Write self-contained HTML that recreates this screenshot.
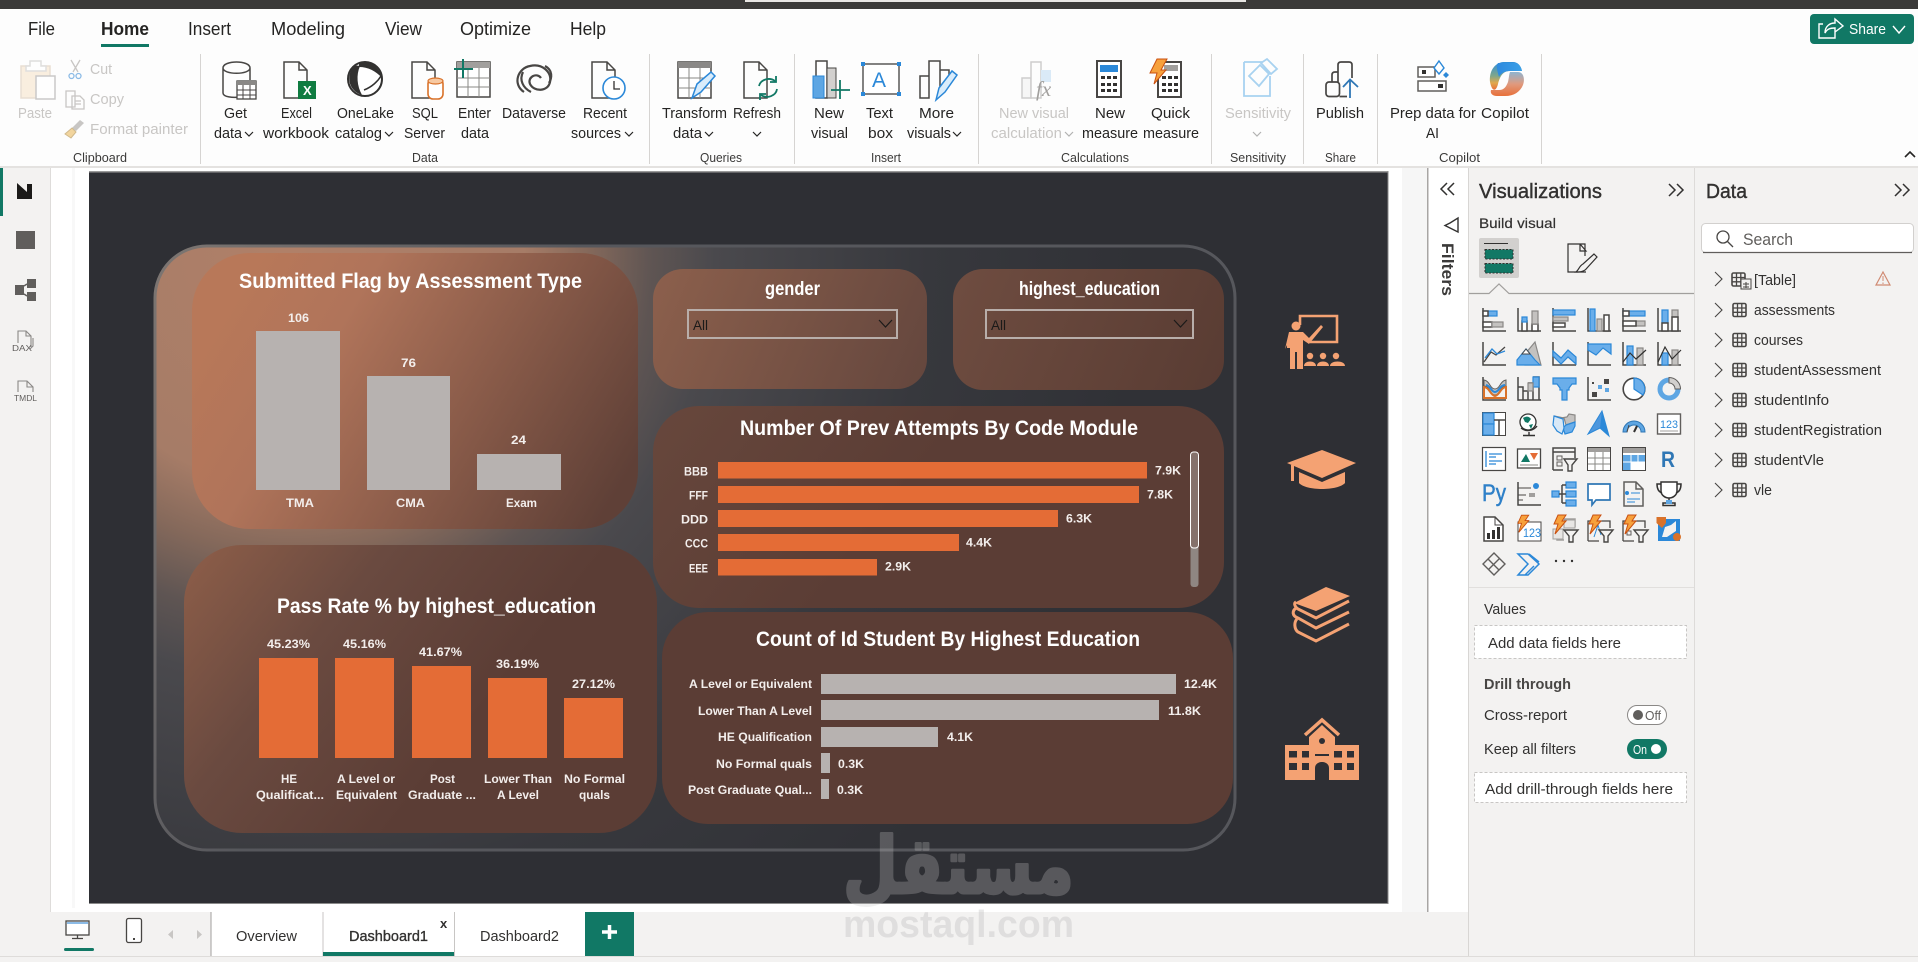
<!DOCTYPE html>
<html lang="en"><head><meta charset="utf-8"><title>Power BI Desktop</title>
<style>
html,body{margin:0;padding:0;background:#fff;width:1918px;height:962px;overflow:hidden}
svg{display:block;font-family:"Liberation Sans",sans-serif}
.t{font-size:18px;fill:#252423}
.r{font-size:15px;fill:#252423}
.q{font-size:15px;fill:#c8c6c4}
.g{font-size:13px;fill:#3b3a39}
.w{font-weight:700;fill:#fff;font-size:21px}
.l{font-weight:700;fill:#f3eeec;font-size:12px}
.v{font-size:14.5px;fill:#323130}
.d{fill:none;stroke:#484644;stroke-width:1.5}
.e{fill:none;stroke:#5f5d5b;stroke-width:1.6}
.b{fill:#6aaeea;stroke:#2b88d8;stroke-width:1.2}
.h{fill:#c4c2c0;stroke:#8a8886;stroke-width:1.2}
.n{fill:#fff;stroke:#484644;stroke-width:1.5}
.o{fill:#f4a273}
</style></head><body>
<svg width="1918" height="962" viewBox="0 0 1918 962" xmlns="http://www.w3.org/2000/svg">
<defs>
<radialGradient id="gOuter" gradientUnits="userSpaceOnUse" cx="0" cy="0" r="1" gradientTransform="translate(290,250) scale(850,860)"><stop offset="0" stop-color="#b08068"/><stop offset=".275" stop-color="#a67c67"/><stop offset=".35" stop-color="#85695b"/><stop offset=".425" stop-color="#5f5553"/><stop offset=".5" stop-color="#4a494d"/><stop offset=".75" stop-color="#37383d"/><stop offset="1" stop-color="#303136"/></radialGradient>
<linearGradient id="gStroke" gradientUnits="userSpaceOnUse" x1="155" y1="246" x2="1235" y2="850"><stop offset="0" stop-color="#7d7672"/><stop offset=".3" stop-color="#56575c"/><stop offset="1" stop-color="#56575c"/></linearGradient>
<linearGradient id="gC1" gradientUnits="userSpaceOnUse" x1="230" y1="300" x2="600" y2="520"><stop offset="0" stop-color="#b87859"/><stop offset=".25" stop-color="#b0745a"/><stop offset="1" stop-color="#5f4037"/></linearGradient>
<linearGradient id="gC2" gradientUnits="userSpaceOnUse" x1="660" y1="275" x2="920" y2="385"><stop offset="0" stop-color="#8b5f4c"/><stop offset="1" stop-color="#65473e"/></linearGradient>
<linearGradient id="gC3" gradientUnits="userSpaceOnUse" x1="960" y1="275" x2="1220" y2="385"><stop offset="0" stop-color="#6e4c40"/><stop offset="1" stop-color="#593c33"/></linearGradient>
<linearGradient id="gC4" gradientUnits="userSpaceOnUse" x1="660" y1="410" x2="850" y2="560"><stop offset="0" stop-color="#67473c"/><stop offset="1" stop-color="#5b3d35"/></linearGradient>
<linearGradient id="gC5" gradientUnits="userSpaceOnUse" x1="200" y1="555" x2="450" y2="750"><stop offset="0" stop-color="#8a5c48"/><stop offset=".45" stop-color="#6a4a40"/><stop offset="1" stop-color="#5b3d35"/></linearGradient>
<linearGradient id="gCopB" x1="0" y1="0" x2="1" y2="0"><stop offset="0" stop-color="#2f8ade"/><stop offset="1" stop-color="#3aa0e8"/></linearGradient>
<linearGradient id="gCopL" x1="0" y1="0" x2="0" y2="1"><stop offset="0" stop-color="#2f8fdc"/><stop offset=".5" stop-color="#7fa68a"/><stop offset=".75" stop-color="#e0a94e"/><stop offset="1" stop-color="#e8703a"/></linearGradient>
<linearGradient id="gCopR" x1="0" y1="0" x2="0" y2="1"><stop offset="0" stop-color="#8fb4d0"/><stop offset=".5" stop-color="#e09a7e"/><stop offset="1" stop-color="#e8703a"/></linearGradient>
<g id="ax"><path class="d" d="M1 0V23H24"/></g>
<g id="tb"><rect x="1" y="1" width="13" height="13" rx="1.5" fill="none" stroke="#484644" stroke-width="1.6"/><path d="M5.5 1V14M9.8 1V14M1 5.5H14M1 9.8H14" stroke="#484644" stroke-width="1.3" fill="none"/></g>
<path id="ch" d="M0 0L4 4L8 0" fill="none" stroke="#252423" stroke-width="1.2"/>
<g id="doc"><path class="d" d="M1 1H16L24 9V37H1Z M16 1V9H24"/></g>
<g id="bolt"><path d="M6 0H14L10 6H14L3 19L6 9H2Z" fill="#f7a13c" stroke="#ca5010" stroke-width="1"/></g>
</defs>

<!-- base -->
<rect width="1918" height="962" fill="#fff"/>
<rect width="1918" height="9" fill="#3b3a39"/>
<rect x="745" width="501" height="2" fill="#e8e6e4"/>
<rect y="9" width="1918" height="157" fill="#fdfdfd"/>
<rect y="166" width="1918" height="2" fill="#e4e2e0"/>

<!-- tabs -->
<text class="t" x="28" y="35" textLength="27" lengthAdjust="spacingAndGlyphs">File</text>
<text class="t" x="101" y="35" textLength="48" lengthAdjust="spacingAndGlyphs" style="font-weight:700">Home</text>
<rect x="101" y="44" width="48" height="3" fill="#117865"/>
<text class="t" x="188" y="35" textLength="43" lengthAdjust="spacingAndGlyphs">Insert</text>
<text class="t" x="271" y="35" textLength="74" lengthAdjust="spacingAndGlyphs">Modeling</text>
<text class="t" x="385" y="35" textLength="37" lengthAdjust="spacingAndGlyphs">View</text>
<text class="t" x="460" y="35" textLength="71" lengthAdjust="spacingAndGlyphs">Optimize</text>
<text class="t" x="570" y="35" textLength="36" lengthAdjust="spacingAndGlyphs">Help</text>
<rect x="1810" y="14" width="104" height="30" rx="4" fill="#117865"/>
<path d="M1823 24H1819V38H1835V32M1825 33C1825 26 1830 23 1835 23V19L1843 26L1835 32V28C1830 28 1827 29 1825 33Z" fill="none" stroke="#fff" stroke-width="1.4"/>
<text x="1849" y="34" font-size="15" fill="#fff" textLength="37" lengthAdjust="spacingAndGlyphs">Share</text>
<path d="M1893 26L1899 33L1905 26" fill="none" stroke="#fff" stroke-width="1.4"/>

<!-- ribbon dividers -->
<g stroke="#d6d4d2" stroke-width="1"><path d="M200.500 54V164M649.500 54V164M794.500 54V164M978.500 54V164M1211.500 54V164M1303.500 54V164M1377.500 54V164M1541.500 54V164"/></g>

<!-- ribbon labels -->
<text class="q" x="18" y="118" textLength="34" lengthAdjust="spacingAndGlyphs">Paste</text>
<text class="q" x="90" y="74" textLength="22" lengthAdjust="spacingAndGlyphs">Cut</text>
<text class="q" x="90" y="104" textLength="34" lengthAdjust="spacingAndGlyphs">Copy</text>
<text class="q" x="90" y="134" textLength="98" lengthAdjust="spacingAndGlyphs">Format painter</text>
<text class="g" x="73" y="162" textLength="54" lengthAdjust="spacingAndGlyphs">Clipboard</text>
<text class="r" x="224" y="118" textLength="23" lengthAdjust="spacingAndGlyphs">Get</text>
<text class="r" x="214" y="138" textLength="28" lengthAdjust="spacingAndGlyphs">data</text><use href="#ch" x="245" y="132"/>
<text class="r" x="281" y="118" textLength="31" lengthAdjust="spacingAndGlyphs">Excel</text>
<text class="r" x="263" y="138" textLength="66" lengthAdjust="spacingAndGlyphs">workbook</text>
<text class="r" x="337" y="118" textLength="57" lengthAdjust="spacingAndGlyphs">OneLake</text>
<text class="r" x="335" y="138" textLength="47" lengthAdjust="spacingAndGlyphs">catalog</text><use href="#ch" x="385" y="132"/>
<text class="r" x="412" y="118" textLength="26" lengthAdjust="spacingAndGlyphs">SQL</text>
<text class="r" x="404" y="138" textLength="41" lengthAdjust="spacingAndGlyphs">Server</text>
<text class="r" x="458" y="118" textLength="33" lengthAdjust="spacingAndGlyphs">Enter</text>
<text class="r" x="461" y="138" textLength="28" lengthAdjust="spacingAndGlyphs">data</text>
<text class="r" x="502" y="118" textLength="64" lengthAdjust="spacingAndGlyphs">Dataverse</text>
<text class="r" x="583" y="118" textLength="44" lengthAdjust="spacingAndGlyphs">Recent</text>
<text class="r" x="571" y="138" textLength="50" lengthAdjust="spacingAndGlyphs">sources</text><use href="#ch" x="625" y="132"/>
<text class="g" x="412" y="162" textLength="26" lengthAdjust="spacingAndGlyphs">Data</text>
<text class="r" x="662" y="118" textLength="65" lengthAdjust="spacingAndGlyphs">Transform</text>
<text class="r" x="673" y="138" textLength="29" lengthAdjust="spacingAndGlyphs">data</text><use href="#ch" x="705" y="132"/>
<text class="r" x="733" y="118" textLength="48" lengthAdjust="spacingAndGlyphs">Refresh</text><use href="#ch" x="753" y="132"/>
<text class="g" x="700" y="162" textLength="42" lengthAdjust="spacingAndGlyphs">Queries</text>
<text class="r" x="814" y="118" textLength="30" lengthAdjust="spacingAndGlyphs">New</text>
<text class="r" x="811" y="138" textLength="37" lengthAdjust="spacingAndGlyphs">visual</text>
<text class="r" x="866" y="118" textLength="27" lengthAdjust="spacingAndGlyphs">Text</text>
<text class="r" x="868" y="138" textLength="25" lengthAdjust="spacingAndGlyphs">box</text>
<text class="r" x="919" y="118" textLength="35" lengthAdjust="spacingAndGlyphs">More</text>
<text class="r" x="907" y="138" textLength="44" lengthAdjust="spacingAndGlyphs">visuals</text><use href="#ch" x="953" y="132"/>
<text class="g" x="871" y="162" textLength="30" lengthAdjust="spacingAndGlyphs">Insert</text>
<text class="q" x="999" y="118" textLength="70" lengthAdjust="spacingAndGlyphs">New visual</text>
<text class="q" x="991" y="138" textLength="71" lengthAdjust="spacingAndGlyphs">calculation</text><use href="#ch" x="1065" y="132" style="opacity:.35"/>
<text class="r" x="1095" y="118" textLength="30" lengthAdjust="spacingAndGlyphs">New</text>
<text class="r" x="1082" y="138" textLength="56" lengthAdjust="spacingAndGlyphs">measure</text>
<text class="r" x="1151" y="118" textLength="39" lengthAdjust="spacingAndGlyphs">Quick</text>
<text class="r" x="1143" y="138" textLength="56" lengthAdjust="spacingAndGlyphs">measure</text>
<text class="g" x="1061" y="162" textLength="68" lengthAdjust="spacingAndGlyphs">Calculations</text>
<text class="q" x="1225" y="118" textLength="66" lengthAdjust="spacingAndGlyphs">Sensitivity</text><use href="#ch" x="1253" y="132" style="opacity:.35"/>
<text class="g" x="1230" y="162" textLength="56" lengthAdjust="spacingAndGlyphs">Sensitivity</text>
<text class="r" x="1316" y="118" textLength="48" lengthAdjust="spacingAndGlyphs">Publish</text>
<text class="g" x="1325" y="162" textLength="31" lengthAdjust="spacingAndGlyphs">Share</text>
<text class="r" x="1390" y="118" textLength="86" lengthAdjust="spacingAndGlyphs">Prep data for</text>
<text class="r" x="1426" y="138" textLength="13" lengthAdjust="spacingAndGlyphs">AI</text>
<text class="r" x="1481" y="118" textLength="48" lengthAdjust="spacingAndGlyphs">Copilot</text>
<text class="g" x="1439" y="162" textLength="41" lengthAdjust="spacingAndGlyphs">Copilot</text>
<path d="M1905 157L1910 152L1915 157" fill="none" stroke="#252423" stroke-width="1.6"/>

<!-- ribbon icons -->
<g opacity=".55">
<path d="M21 66H50V98H21Z" fill="#f6e2c8" stroke="#d8c6b0" stroke-width="1.5"/><path d="M30 66V61H41V66H46V71H26V66Z" fill="#fff" stroke="#c8c6c4" stroke-width="1.5"/><rect x="36" y="76" width="19" height="23" fill="#fff" stroke="#a19f9d" stroke-width="1.5"/>
</g>
<g fill="none" stroke="#c8c6c4" stroke-width="1.3"><path d="M71 60L78 72M80 60L73 72"/><circle cx="71.500" cy="76" r="2.500" stroke="#8cbbe6"/><circle cx="78.500" cy="76" r="2.500" stroke="#8cbbe6"/>
<path d="M66 91H75V107H66ZM72 96H80L84 100V109H72Z M75 101H81M75 104H81"/></g>
<path d="M80 120L84 123L76 131L72 128Z" fill="#c8c6c4"/><path d="M72 128L76 132L71 138L65 134Z" fill="#f2d59e" stroke="#d0b98c"/>
<!-- get data -->
<path class="d" d="M223 68V93C223 97 233 98 240 97M250 80V68M223 68C223 60 250 60 250 68C250 75 223 75 223 68Z"/><rect x="237" y="81" width="19" height="18" fill="#fff" stroke="#484644" stroke-width="1.3"/><rect x="237" y="81" width="19" height="4" fill="#8a8886"/><path d="M243 85V99M250 85V99M237 90H256M237 95H256" stroke="#484644"/>
<!-- excel -->
<use href="#doc" x="283" y="61"/><rect x="298" y="81" width="18" height="18" fill="#107c41"/><text x="303" y="95" font-size="13" font-weight="700" fill="#fff">X</text>
<!-- onelake -->
<circle cx="365" cy="79" r="17" fill="#fff" stroke="#323130" stroke-width="2"/><path d="M351 70C346 82 352 92 362 95C357 86 356 75 360 66C356 65 353 66 351 70Z" fill="#323130"/><path d="M359 62C369 60 379 66 382 78C376 71 368 67 359 67Z" fill="#323130"/><path d="M364 90C372 87 378 81 381 76" fill="none" stroke="#323130" stroke-width="1.500"/>
<!-- sql -->
<use href="#doc" x="411" y="61"/><rect x="428" y="79" width="15" height="20" rx="5" fill="#fff" stroke="#d9722a" stroke-width="1.6"/><ellipse cx="435.500" cy="81" rx="7.500" ry="3" fill="#f7c9a2" stroke="#d9722a" stroke-width="1.2"/>
<!-- enter data -->
<rect x="457" y="62" width="33" height="35" fill="#fff" stroke="#484644" stroke-width="1.5"/><rect x="457" y="62" width="33" height="6" fill="#a19f9d"/><path d="M468 68V97M479 68V97M457 78H490M457 87H490" stroke="#8a8886"/><path d="M455 59V78M446 69H465" stroke="#117865" stroke-width="2" transform="translate(8,0)"/>
<!-- dataverse -->
<g fill="none" stroke="#484644" stroke-width="2.2"><path d="M524 92C512 84 518 68 530 66C542 63 552 72 550 82C548 92 534 92 530 84C527 77 537 72 541 78"/><path d="M545 66C553 70 552 78 549 83M523 72C519 80 523 88 531 92"/></g>
<!-- recent -->
<use href="#doc" x="591" y="61"/><circle cx="614" cy="88" r="11" fill="#fff" stroke="#2b88d8" stroke-width="1.6"/><path d="M614 81V89H620" fill="none" stroke="#323130" stroke-width="1.3"/>
<!-- transform -->
<rect x="678" y="62" width="33" height="36" fill="#fff" stroke="#484644" stroke-width="1.5"/><rect x="678" y="62" width="33" height="6" fill="#8a8886"/><path d="M689 68V98M700 68V98M678 78H711M678 88H711" stroke="#8a8886"/><path d="M692 98L697 84L711 72L715 76L701 92Z" fill="#d9ecfb" stroke="#2b88d8" stroke-width="1.5"/>
<!-- refresh -->
<use href="#doc" x="743" y="61"/><g fill="none" stroke="#117865" stroke-width="1.8"><path d="M759 86A10 9 0 0 1 775 81M777 89A10 9 0 0 1 761 95"/><path d="M776 76V82H770M760 100V94H766"/></g>
<!-- new visual -->
<rect x="816" y="61" width="11" height="37" fill="#fff" stroke="#484644" stroke-width="1.5"/><rect x="827" y="68" width="9" height="30" fill="#d2d0ce" stroke="#484644"/><rect x="813" y="76" width="11" height="22" fill="#5ea6e3" stroke="#2b88d8"/><path d="M840 80V99M831 90H850" stroke="#117865" stroke-width="1.8"/>
<!-- text box -->
<rect x="863" y="64" width="36" height="30" fill="#fff" stroke="#323130" stroke-width="1.2"/><g fill="#2b88d8"><rect x="861" y="62" width="4" height="4"/><rect x="897" y="62" width="4" height="4"/><rect x="861" y="92" width="4" height="4"/><rect x="897" y="92" width="4" height="4"/></g><text x="872" y="87" font-size="21" fill="#2b88d8">A</text>
<!-- more visuals -->
<path class="d" d="M920 98V76H929V98ZM929 76V61H940V90M940 70H949V78"/><path d="M936 100L939 88L952 71L957 75L945 92Z" fill="#d9ecfb" stroke="#2b88d8" stroke-width="1.5"/>
<!-- new visual calc -->
<g opacity=".4"><rect x="1022" y="78" width="9" height="20" fill="#eee" stroke="#8a8886" stroke-width="1.5"/><rect x="1031" y="62" width="10" height="36" fill="#fff" stroke="#8a8886" stroke-width="1.5"/><rect x="1041" y="70" width="10" height="12" fill="#a8cff0"/></g><text x="1036" y="96" font-size="21" font-style="italic" font-family="Liberation Serif" fill="#a19f9d">fx</text>
<!-- measure -->
<rect x="1097" y="61" width="24" height="36" fill="#fff" stroke="#484644" stroke-width="2"/><rect x="1100" y="65" width="18" height="7" fill="#2b88d8"/>
<g fill="#323130"><rect x="1101" y="76" width="4" height="3"/><rect x="1107" y="76" width="4" height="3"/><rect x="1113" y="76" width="4" height="3"/><rect x="1101" y="83" width="4" height="3"/><rect x="1107" y="83" width="4" height="3"/><rect x="1113" y="83" width="4" height="3"/><rect x="1101" y="89" width="4" height="3"/><rect x="1107" y="89" width="4" height="3"/><rect x="1113" y="89" width="4" height="3"/></g>
<!-- quick measure -->
<rect x="1158" y="62" width="23" height="35" fill="#fff" stroke="#484644" stroke-width="2"/><rect x="1164" y="65" width="14" height="6" fill="#a19f9d"/>
<g fill="#323130"><rect x="1162" y="76" width="4" height="3"/><rect x="1168" y="76" width="4" height="3"/><rect x="1174" y="76" width="4" height="3"/><rect x="1162" y="83" width="4" height="3"/><rect x="1168" y="83" width="4" height="3"/><rect x="1174" y="83" width="4" height="3"/><rect x="1162" y="89" width="4" height="3"/><rect x="1168" y="89" width="4" height="3"/><rect x="1174" y="89" width="4" height="3"/></g>
<path d="M1157 59H1167L1161 70H1166L1154 84L1157 73H1150Z" fill="#f7a13c" stroke="#ca5010"/>
<!-- sensitivity -->
<g fill="none" stroke="#a8d2f0" stroke-width="1.8"><path d="M1244 62H1262M1270 76V96H1244V62"/><path d="M1249 76L1259 86L1269 74L1260 65ZM1261 63L1267 59L1277 69L1271 74Z"/></g>
<!-- publish -->
<g fill="none" stroke="#484644" stroke-width="1.700"><rect x="1326" y="82" width="13.500" height="14.500" rx="3"/><path d="M1332 82V75Q1332 72 1335 72H1338M1338 82V65Q1338 62 1341 62H1349Q1352 62 1352 65V78M1339.500 96.500H1347"/></g><path d="M1350 98V80M1343 87L1350 79.500L1358 87" fill="none" stroke="#2f77b5" stroke-width="1.800"/>
<!-- prep -->
<rect x="1418" y="67" width="17" height="10" fill="#fff" stroke="#605e5c" stroke-width="1.500"/><rect x="1422" y="70" width="4" height="4" fill="#323130"/><rect x="1418" y="81" width="28" height="10" fill="#fff" stroke="#605e5c" stroke-width="1.500"/><rect x="1438" y="84" width="5" height="4" fill="#323130"/>
<path d="M1439 61L1444 68L1439 74L1434 68Z" fill="#fff" stroke="#2b88d8" stroke-width="1.400"/><path d="M1446 72L1449 75L1446 78L1443 75Z" fill="#2b88d8"/>
<!-- copilot -->
<path d="M1490 82C1489 72 1494 63 1503 62H1513C1518 62 1521 66 1522 71H1510C1503 71 1500 76 1498 84C1496 92 1492 92 1490 82Z" fill="url(#gCopL)"/>
<path d="M1498 63H1513C1518 62 1521 66 1522 71H1510C1505 71 1501 73 1499 77C1497 70 1496 66 1498 63Z" fill="url(#gCopB)"/>
<path d="M1510 72H1518C1524 72 1525 80 1523 85C1520 92 1514 96 1505 96H1497C1492 96 1490 93 1491 90H1499C1504 90 1506 87 1508 82C1509 78 1509 74 1510 72Z" fill="url(#gCopR)"/>

<!-- left nav -->
<rect y="168" width="50" height="744" fill="#f3f2f1"/><rect x="50" y="168" width="1" height="744" fill="#dedcda"/>
<rect y="168" width="3" height="48" fill="#117865"/>
<path d="M17 183L27 192V184H32V199H17Z" fill="#1b1a19"/>
<rect x="16" y="231" width="19" height="18" fill="#605e5c"/>
<rect x="15" y="285" width="9" height="10" fill="#605e5c"/><rect x="27" y="279" width="9" height="9" fill="#605e5c"/><rect x="27" y="292" width="9" height="9" fill="#605e5c"/><path d="M24 286L27 284M24 294L27 296" stroke="#605e5c" stroke-width="1.5"/>
<path d="M18 343V331H26L31 336V347M26 331V336H31M33 338V346L30 349" fill="none" stroke="#8a8886" stroke-width="1.1"/><text x="12" y="351" font-size="8" fill="#605e5c" textLength="20" lengthAdjust="spacingAndGlyphs">DAX</text>
<path d="M18 392V381H27L33 387V392M27 381V387H33" fill="none" stroke="#8a8886" stroke-width="1.1"/><text x="14" y="401" font-size="8" fill="#605e5c" textLength="23" lengthAdjust="spacingAndGlyphs">TMDL</text>

<!-- canvas -->
<rect x="72" y="168" width="3" height="740" fill="#f8f8f8"/>
<rect x="1402" y="168" width="26" height="744" fill="#f6f6f6"/>
<rect x="89" y="171" width="1299" height="733" fill="#2e2f34"/>
<rect x="89" y="171" width="1299" height="1.500" fill="#9a9a9a"/><rect x="89" y="903" width="1299" height="1" fill="#8a8a8a"/><rect x="1387.500" y="171" width="1" height="733" fill="#8a8a8a"/>
<rect x="155" y="246" width="1080" height="604" rx="52" fill="url(#gOuter)" stroke="url(#gStroke)" stroke-width="3"/>
<rect x="192" y="253" width="446" height="276" rx="58" fill="url(#gC1)"/>
<rect x="653" y="269" width="274" height="120" rx="30" fill="url(#gC2)"/>
<rect x="953" y="269" width="271" height="121" rx="30" fill="url(#gC3)"/>
<rect x="653" y="406" width="571" height="202" rx="46" fill="url(#gC4)"/>
<rect x="184" y="545" width="473" height="288" rx="58" fill="url(#gC5)"/>
<rect x="662" y="612" width="571" height="212" rx="46" fill="#5b3d35"/>

<!-- Submitted -->
<text class="w" x="239" y="288" textLength="343" lengthAdjust="spacingAndGlyphs">Submitted Flag by Assessment Type</text>
<g fill="#b7b2b0"><rect x="256" y="331" width="84" height="159"/><rect x="367" y="376" width="83" height="114"/><rect x="477" y="454" width="84" height="36"/></g>
<text class="l" x="288" y="322" textLength="21" lengthAdjust="spacingAndGlyphs">106</text>
<text class="l" x="401" y="367" textLength="15" lengthAdjust="spacingAndGlyphs">76</text>
<text class="l" x="511" y="444" textLength="15" lengthAdjust="spacingAndGlyphs">24</text>
<text class="l" x="286" y="507" textLength="28" lengthAdjust="spacingAndGlyphs">TMA</text>
<text class="l" x="396" y="507" textLength="29" lengthAdjust="spacingAndGlyphs">CMA</text>
<text class="l" x="506" y="507" textLength="31" lengthAdjust="spacingAndGlyphs">Exam</text>

<!-- slicers -->
<text x="765" y="295" font-size="19" font-weight="700" fill="#fff" textLength="55" lengthAdjust="spacingAndGlyphs">gender</text>
<text x="1019" y="295" font-size="19" font-weight="700" fill="#fff" textLength="141" lengthAdjust="spacingAndGlyphs">highest_education</text>
<rect x="688" y="310" width="209" height="28" fill="none" stroke="#b8aeaa" stroke-width="2"/>
<rect x="986" y="310" width="207" height="28" fill="none" stroke="#b8aeaa" stroke-width="2"/>
<text x="693" y="330" font-size="14" fill="#1b1a19" textLength="15" lengthAdjust="spacingAndGlyphs">All</text>
<text x="991" y="330" font-size="14" fill="#1b1a19" textLength="15" lengthAdjust="spacingAndGlyphs">All</text>
<path d="M879 320L885.500 327L892 320M1174 320L1180.500 327L1187 320" fill="none" stroke="#1b1a19" stroke-width="1.2"/>

<!-- Number -->
<text class="w" x="740" y="435" textLength="398" lengthAdjust="spacingAndGlyphs">Number Of Prev Attempts By Code Module</text>
<g fill="#e46c36"><rect x="718" y="462" width="429" height="16.500"/><rect x="718" y="486" width="421" height="17"/><rect x="718" y="510" width="340" height="17"/><rect x="718" y="534" width="241" height="17"/><rect x="718" y="559" width="159" height="16.500"/></g>
<text class="l" x="684" y="475.500" textLength="24" lengthAdjust="spacingAndGlyphs">BBB</text>
<text class="l" x="689" y="499.500" textLength="19" lengthAdjust="spacingAndGlyphs">FFF</text>
<text class="l" x="681" y="523.500" textLength="27" lengthAdjust="spacingAndGlyphs">DDD</text>
<text class="l" x="685" y="547.500" textLength="23" lengthAdjust="spacingAndGlyphs">CCC</text>
<text class="l" x="689" y="572.500" textLength="19" lengthAdjust="spacingAndGlyphs">EEE</text>
<text class="l" x="1155" y="474.500" textLength="26" lengthAdjust="spacingAndGlyphs">7.9K</text>
<text class="l" x="1147" y="498.500" textLength="26" lengthAdjust="spacingAndGlyphs">7.8K</text>
<text class="l" x="1066" y="522.500" textLength="26" lengthAdjust="spacingAndGlyphs">6.3K</text>
<text class="l" x="966" y="546.500" textLength="26" lengthAdjust="spacingAndGlyphs">4.4K</text>
<text class="l" x="885" y="570.500" textLength="26" lengthAdjust="spacingAndGlyphs">2.9K</text>
<rect x="1190.500" y="452" width="8" height="135" rx="3" fill="#8f8682"/><rect x="1190.500" y="452" width="8" height="96" rx="3" fill="#85716b" stroke="#fff" stroke-width="1"/>

<!-- Pass -->
<text class="w" x="277" y="613" textLength="319" lengthAdjust="spacingAndGlyphs">Pass Rate % by highest_education</text>
<g fill="#e46c36"><rect x="259" y="658" width="59" height="100"/><rect x="335" y="658" width="59" height="100"/><rect x="412" y="666" width="59" height="92"/><rect x="488" y="678" width="59" height="80"/><rect x="564" y="698" width="59" height="60"/></g>
<text class="l" x="267" y="648" textLength="43" lengthAdjust="spacingAndGlyphs">45.23%</text>
<text class="l" x="343" y="648" textLength="43" lengthAdjust="spacingAndGlyphs">45.16%</text>
<text class="l" x="419" y="656" textLength="43" lengthAdjust="spacingAndGlyphs">41.67%</text>
<text class="l" x="496" y="668" textLength="43" lengthAdjust="spacingAndGlyphs">36.19%</text>
<text class="l" x="572" y="688" textLength="43" lengthAdjust="spacingAndGlyphs">27.12%</text>
<text class="l" x="281" y="783" textLength="16" lengthAdjust="spacingAndGlyphs">HE</text>
<text class="l" x="256" y="799" textLength="68" lengthAdjust="spacingAndGlyphs">Qualificat...</text>
<text class="l" x="337" y="783" textLength="58" lengthAdjust="spacingAndGlyphs">A Level or</text>
<text class="l" x="336" y="799" textLength="61" lengthAdjust="spacingAndGlyphs">Equivalent</text>
<text class="l" x="430" y="783" textLength="25" lengthAdjust="spacingAndGlyphs">Post</text>
<text class="l" x="408" y="799" textLength="68" lengthAdjust="spacingAndGlyphs">Graduate ...</text>
<text class="l" x="484" y="783" textLength="68" lengthAdjust="spacingAndGlyphs">Lower Than</text>
<text class="l" x="497" y="799" textLength="42" lengthAdjust="spacingAndGlyphs">A Level</text>
<text class="l" x="564" y="783" textLength="61" lengthAdjust="spacingAndGlyphs">No Formal</text>
<text class="l" x="579" y="799" textLength="31" lengthAdjust="spacingAndGlyphs">quals</text>

<!-- Count -->
<text class="w" x="756" y="646" textLength="384" lengthAdjust="spacingAndGlyphs">Count of Id Student By Highest Education</text>
<g fill="#b7b2b0"><rect x="821" y="674" width="355" height="20"/><rect x="821" y="700" width="338" height="20"/><rect x="821" y="727" width="117" height="20"/><rect x="821" y="753" width="9" height="20"/><rect x="821" y="779" width="8" height="20"/></g>
<text class="l" x="689" y="688" textLength="123" lengthAdjust="spacingAndGlyphs">A Level or Equivalent</text>
<text class="l" x="698" y="715" textLength="114" lengthAdjust="spacingAndGlyphs">Lower Than A Level</text>
<text class="l" x="718" y="741" textLength="94" lengthAdjust="spacingAndGlyphs">HE Qualification</text>
<text class="l" x="716" y="768" textLength="96" lengthAdjust="spacingAndGlyphs">No Formal quals</text>
<text class="l" x="688" y="794" textLength="124" lengthAdjust="spacingAndGlyphs">Post Graduate Qual...</text>
<text class="l" x="1184" y="688" textLength="33" lengthAdjust="spacingAndGlyphs">12.4K</text>
<text class="l" x="1168" y="715" textLength="33" lengthAdjust="spacingAndGlyphs">11.8K</text>
<text class="l" x="947" y="741" textLength="26" lengthAdjust="spacingAndGlyphs">4.1K</text>
<text class="l" x="838" y="768" textLength="26" lengthAdjust="spacingAndGlyphs">0.3K</text>
<text class="l" x="837" y="794" textLength="26" lengthAdjust="spacingAndGlyphs">0.3K</text>

<!-- big side icons -->
<g>
<path d="M1300 325V316H1337V342H1310" fill="none" stroke="#f4a273" stroke-width="2.600"/>
<circle class="o" cx="1296" cy="326" r="4.500"/>
<path class="o" d="M1289 332H1303L1309 338L1321 325L1323 327L1309 344L1303 340V369H1297V352H1295V369H1290V348H1287V345L1285 349Z"/>
<g class="o"><circle cx="1310" cy="356" r="3.200"/><circle cx="1323" cy="356" r="3.200"/><circle cx="1336" cy="356" r="3.200"/><path d="M1304 366C1304 360 1316 360 1316 366ZM1317 366C1317 360 1329 360 1329 366ZM1330 366C1330 360 1345 360 1345 366Z"/></g>
<path class="o" d="M1287 463L1322 450L1356 463L1322 478Z"/>
<path class="o" d="M1299 472L1322 482L1345 472V483C1338 491 1306 491 1299 483Z"/>
<path class="o" d="M1291 465H1294V481H1291Z"/>
<path class="o" d="M1294 603L1326 587L1350 596L1316 611Z"/>
<g fill="none" stroke="#f4a273" stroke-width="3"><path d="M1349 601L1316 618L1298 609C1294 606 1294 603 1296 602M1349 612L1316 628L1298 618C1292 616 1292 611 1296 608M1349 624L1316 641L1298 632C1294 629 1294 622 1297 619"/></g>
<path d="M1305 735L1322 720L1339 735" fill="none" stroke="#f4a273" stroke-width="3.500"/>
<path class="o" d="M1309 745V737L1322 725L1335 737V745H1359V780H1285V745Z"/>
<g fill="#2e2f34"><circle cx="1322" cy="741" r="3"/><rect x="1315" y="754" width="14" height="2"/><rect x="1289" y="751" width="8" height="6.500"/><rect x="1302" y="751" width="7" height="6.500"/><rect x="1289" y="763" width="8" height="7"/><rect x="1302" y="763" width="7" height="7"/><rect x="1334" y="751" width="8" height="6.500"/><rect x="1347" y="751" width="7" height="6.500"/><rect x="1334" y="763" width="8" height="7"/><rect x="1347" y="763" width="7" height="7"/><path d="M1315 780V768C1315 760 1329 760 1329 768V780Z"/></g>
</g>

<!-- Filters pane -->
<rect x="1427" y="168" width="1.500" height="744" fill="#a8a6a4"/>
<rect x="1428.500" y="168" width="39.500" height="744" fill="#fff"/>
<path d="M1447 183L1441 189L1447 195M1454 183L1448 189L1454 195" fill="none" stroke="#323130" stroke-width="1.500"/>
<path d="M1458 218V232L1450 228L1445 225.500L1450 223Z" fill="none" stroke="#323130" stroke-width="1.400"/>
<text transform="translate(1442,243) rotate(90)" font-size="17" font-weight="700" fill="#3b3a39" textLength="53" lengthAdjust="spacingAndGlyphs">Filters</text>

<!-- Viz / data panes -->
<rect x="1468" y="168" width="450" height="789" fill="#f3f2f1"/>
<rect x="1468" y="168" width="1" height="788" fill="#d8d6d4"/><rect x="1694" y="168" width="1" height="788" fill="#dddbd9"/>
<rect x="0" y="912" width="1468" height="45" fill="#f3f2f1"/>
<rect x="0" y="956" width="1918" height="1" fill="#dedcda"/><rect y="957" width="1918" height="5" fill="#f3f2f1"/>
<text x="1479" y="198" font-size="20" fill="#323130" stroke="#323130" stroke-width=".4" textLength="123" lengthAdjust="spacingAndGlyphs">Visualizations</text>
<path d="M1669 184L1675 190L1669 196M1677 184L1683 190L1677 196M1895 184L1901 190L1895 196M1903 184L1909 190L1903 196" fill="none" stroke="#323130" stroke-width="1.500"/>
<text x="1706" y="198" font-size="20" fill="#323130" stroke="#323130" stroke-width=".4" textLength="41" lengthAdjust="spacingAndGlyphs">Data</text>
<text x="1479" y="228" font-size="14" fill="#323130" stroke="#323130" stroke-width=".2" textLength="77" lengthAdjust="spacingAndGlyphs">Build visual</text>
<rect x="1479" y="238" width="40" height="40" rx="2" fill="#d2d0ce"/>
<path d="M1484 243.500H1508" stroke="#323130"/>
<rect x="1485" y="249.500" width="28" height="9.500" fill="#117865" stroke="#323130" stroke-dasharray="2 1.500"/><rect x="1485" y="263.500" width="28" height="9.500" fill="#117865" stroke="#323130" stroke-dasharray="2 1.500"/>
<path d="M1585 256V244H1568V272H1586M1580 244V251H1586L1580 244" fill="none" stroke="#323130" stroke-width="1.200"/><path d="M1594 254L1597 257L1587 268C1584 272 1580 272 1576 272C1579 270 1579 266 1583 264Z" fill="#f3f2f1" stroke="#323130" stroke-width="1.200"/>
<path d="M1469 293.500H1489L1499 284L1509 293.500H1694" fill="none" stroke="#a19f9d" stroke-width="1.200"/>

<!-- viz grid -->
<g>
<g transform="translate(1482,308)"><use href="#ax"/><rect class="b" x="3" y="3" width="12" height="5"/><rect class="n" x="1" y="3" width="5" height="5"/><rect class="n" x="1" y="14" width="9" height="5"/><rect class="h" x="10" y="14" width="11" height="5"/></g>
<g transform="translate(1517,308)"><use href="#ax"/><rect class="n" x="5" y="13" width="5" height="10"/><rect class="b" x="5" y="9" width="5" height="5"/><rect class="n" x="15" y="16" width="6" height="7"/><rect class="h" x="15" y="3" width="6" height="13"/></g>
<g transform="translate(1552,308)"><use href="#ax"/><rect class="b" x="1" y="2" width="22" height="5"/><rect class="h" x="1" y="9" width="15" height="4"/><rect class="n" x="1" y="15" width="12" height="4"/></g>
<g transform="translate(1587,308)"><use href="#ax"/><rect class="b" x="3" y="1" width="5" height="22"/><rect class="h" x="10" y="11" width="5" height="12"/><rect class="n" x="17" y="7" width="5" height="16"/></g>
<g transform="translate(1622,308)"><use href="#ax"/><rect class="b" x="1" y="3" width="22" height="5"/><rect class="n" x="1" y="3" width="6" height="5"/><rect class="h" x="14" y="13" width="9" height="5"/><rect class="n" x="1" y="13" width="13" height="5"/></g>
<g transform="translate(1657,308)"><use href="#ax"/><rect class="b" x="5" y="2" width="6" height="13"/><rect class="n" x="5" y="15" width="6" height="8"/><rect class="h" x="15" y="2" width="6" height="7"/><rect class="n" x="15" y="9" width="6" height="14"/></g>

<g transform="translate(1482,342)"><use href="#ax"/><path d="M2 20L9 10L14 13L23 5" fill="none" stroke="#484644" stroke-width="1.300"/><path d="M3 16L10 7L15 12L23 9" fill="none" stroke="#2b88d8" stroke-width="1.300"/></g>
<g transform="translate(1517,342)"><path class="h" d="M8 12L18 0L24 23H8Z"/><path class="b" d="M0 23V18L9 7L18 18L23 23Z"/><path d="M9 7L5 12H13Z" fill="#fff" stroke="#484644"/></g>
<g transform="translate(1552,342)"><use href="#ax"/><path class="b" d="M1 9L9 16L16 8L24 15V22L16 15L9 22L1 14Z"/></g>
<g transform="translate(1587,342)"><use href="#ax"/><path class="b" d="M1 2H24V12L16 6L9 13L1 8Z"/></g>
<g transform="translate(1622,342)"><use href="#ax"/><rect class="b" x="5" y="4" width="6" height="19"/><rect class="h" x="15" y="6" width="6" height="17"/><path d="M1 20L8 11L14 17L24 8" fill="none" stroke="#323130" stroke-width="1.200"/></g>
<g transform="translate(1657,342)"><use href="#ax"/><rect class="b" x="5" y="11" width="6" height="12"/><rect class="h" x="15" y="8" width="6" height="15"/><path d="M1 20L8 5L15 17L24 8" fill="none" stroke="#323130" stroke-width="1.200"/></g>

<g transform="translate(1482,377)"><use href="#ax"/><path d="M2 3C8 4 8 12 13 12C18 12 18 4 24 3V9C18 9 18 18 13 18C8 18 8 9 2 9Z" fill="#c4c2c0" stroke="#605e5c"/><path d="M2 10C8 11 8 18 13 19C18 18 18 11 24 10V21H2Z" fill="none" stroke="#d9722a" stroke-width="2"/><path d="M4 8C9 9 9 15 13 15C17 15 18 8 23 8" fill="none" stroke="#2b88d8" stroke-width="2"/></g>
<g transform="translate(1517,377)"><path class="d" d="M1 0V23H24M1 10H6V23M6 14H11V23M11 6H16V23M16 0H22V23"/><rect class="b" x="16" y="0" width="6" height="10"/><rect class="h" x="11" y="6" width="5" height="8"/></g>
<g transform="translate(1552,377)"><path class="b" d="M1 1H24V7H20L17 11V13H15V23H10V13H8V11L5 7H1Z"/></g>
<g transform="translate(1587,377)"><use href="#ax"/><rect x="17" y="2" width="5" height="5" fill="#484644"/><rect x="11" y="8" width="4" height="4" fill="#5ea6e3"/><rect x="18" y="11" width="4" height="4" fill="#5ea6e3"/><rect x="5" y="15" width="5" height="5" fill="#484644"/><rect x="5" y="5" width="2" height="2" fill="#484644"/></g>
<g transform="translate(1622,377)"><circle cx="12" cy="12" r="10.800" fill="#fff" stroke="#484644" stroke-width="1.600"/><path class="b" d="M12 1A11 11 0 0 1 21 18L12 12Z"/></g>
<g transform="translate(1657,377)"><circle cx="12" cy="12" r="9" fill="none" stroke="#5ea6e3" stroke-width="5"/><path d="M12 0.500A11.500 11.500 0 0 1 23.500 12H18A6 6 0 0 0 12 6Z" fill="#d2d0ce" stroke="#605e5c"/></g>

<g transform="translate(1482,412)"><rect x="0.500" y="0.500" width="23" height="23" fill="#fff" stroke="#484644"/><rect class="b" x="1" y="1" width="11" height="11"/><rect class="b" x="1" y="12" width="11" height="11"/><path class="d" d="M12 8H23M17 8V23"/></g>
<g transform="translate(1517,412)"><circle cx="11" cy="10" r="8" fill="#fff" stroke="#323130" stroke-width="1.300"/><path d="M6 6C9 4 12 4 14 7L11 11L8 10ZM12 13L16 12L14 17Z" fill="#117865"/><path d="M20 14A11 11 0 0 1 4 16M12 20V23M6 23.500H18" fill="none" stroke="#323130" stroke-width="1.400"/></g>
<g transform="translate(1552,412)"><path class="h" d="M2 4L9 6L15 5L17 2L23 3V10L14 13L12 6Z"/><path class="b" d="M14 13L23 10V14L20 20L13 22L11 16Z"/><path class="b" d="M2 4L11 7L12 16L10 22L5 19L1 13Z" style="fill:#d8e8f6"/></g>
<g transform="translate(1587,412)"><path d="M15 -1L22 24L13 16L1 22Z" fill="#4e97dd" stroke="#2b88d8"/><path d="M15 -1L13 16L22 24Z" fill="#2b88d8"/></g>
<g transform="translate(1622,412)"><path d="M1 20A11 11 0 0 1 23 20H19A7 7 0 0 0 5 20Z" fill="#5ea6e3" stroke="#2f77b5"/><path d="M12 20L15 14" stroke="#323130" stroke-width="2"/><path d="M5 20L7 13" stroke="#484644"/></g>
<g transform="translate(1657,412)"><rect x="0.500" y="2" width="23" height="20" fill="#fff" stroke="#605e5c" stroke-width="1.400"/><text x="3" y="16" font-size="11" fill="#2b88d8" textLength="18" lengthAdjust="spacingAndGlyphs">123</text><path d="M3 19H21" stroke="#a19f9d"/></g>

<g transform="translate(1482,447)"><rect x="0.500" y="0.500" width="23" height="23" fill="#fff" stroke="#484644" stroke-width="1.200"/><path d="M4 4V20M7 7H20M7 10H14M7 14H20M7 17H14" stroke="#2b88d8" stroke-width="1.300"/></g>
<g transform="translate(1517,447)"><rect x="0.500" y="2" width="23" height="19" fill="#fff" stroke="#484644" stroke-width="1.300"/><path d="M4 15L9 7L13 15Z" fill="#117865"/><path d="M13 6H21L17 13Z" fill="#e46c36"/><path d="M3 18H21" stroke="#8a8886"/></g>
<g transform="translate(1552,447)"><path class="d" d="M1 23V1H23V11M1 5H23M1 23H11"/><rect x="5" y="9" width="5" height="4" fill="none" stroke="#605e5c"/><rect x="5" y="15" width="5" height="4" fill="none" stroke="#605e5c"/><path d="M12 12H25L20 18V24H16V18Z" fill="#f3f2f1" stroke="#484644" stroke-width="1.400"/></g>
<g transform="translate(1587,447)"><rect x="0.500" y="0.500" width="23" height="23" fill="#fff" stroke="#484644"/><rect x="1" y="1" width="22" height="4" fill="#a19f9d"/><path d="M8 5V23M16 5V23M1 11H23M1 17H23" stroke="#8a8886"/></g>
<g transform="translate(1622,447)"><rect x="0.500" y="0.500" width="23" height="23" fill="#fff" stroke="#484644"/><rect x="1" y="1" width="22" height="5" fill="#a19f9d"/><rect x="1" y="8" width="8" height="15" fill="#5ea6e3"/><rect x="9" y="8" width="14" height="7" fill="#5ea6e3"/><path d="M9 6V23M16 6V23M1 15H23" stroke="#fff"/></g>
<text x="1661" y="467" font-size="22" font-weight="700" fill="#2f77b5" textLength="14" lengthAdjust="spacingAndGlyphs">R</text>

<text x="1482" y="501" font-size="24" fill="#2f80c8" stroke="#2f80c8" stroke-width=".5" textLength="24" lengthAdjust="spacingAndGlyphs">Py</text>
<g transform="translate(1517,482)"><use href="#ax"/><path d="M1 6H14M1 13H9M1 18H6" stroke="#484644"/><circle cx="19" cy="4" r="3" fill="#2b88d8"/><rect x="12" y="11" width="6" height="4" fill="#a19f9d"/></g>
<g transform="translate(1552,482)"><rect class="b" x="0" y="9" width="7" height="6"/><rect class="b" x="14" y="0" width="10" height="6"/><rect class="b" x="14" y="9" width="10" height="6"/><rect class="b" x="14" y="18" width="10" height="6"/><path class="d" d="M7 12H14M10 3H14M10 21H14M10 3V21"/></g>
<g transform="translate(1587,482)"><path d="M1 2H23V18H9L5 23V18H1Z" fill="#fff" stroke="#2f77b5" stroke-width="1.700"/></g>
<g transform="translate(1622,482)"><path class="d" d="M2 24V0H14L21 7V24ZM14 0V7H21" style="stroke:#605e5c"/><circle cx="5" cy="11" r="2" fill="#2b88d8"/><path d="M9 11H18M5 17H18M5 20H13" stroke="#2b88d8"/></g>
<g transform="translate(1657,482)"><path d="M4 0H20V9C20 13 16 16 12 16C8 16 4 13 4 9Z" fill="#fff" stroke="#323130" stroke-width="1.500"/><path d="M4 2H0C0 7 2 10 5 11M20 2H24C24 7 22 10 19 11M12 16V20M6 23.500H18V21H6Z" fill="none" stroke="#323130" stroke-width="1.500"/><path d="M9 18H15V22H9Z" fill="#5ea6e3"/></g>

<g transform="translate(1482,517)"><path d="M2 24V0H13L21 8V24Z" fill="#fff" stroke="#484644" stroke-width="1.500"/><path d="M13 0V8H21" fill="none" stroke="#484644"/><rect x="5" y="16" width="3" height="6" fill="#323130"/><rect x="10" y="13" width="3" height="9" fill="#323130"/><rect x="15" y="10" width="3" height="12" fill="#323130"/></g>
<g transform="translate(1517,517)"><rect x="1" y="5" width="23" height="19" fill="#fff" stroke="#484644"/><text x="6" y="20" font-size="12" fill="#2b88d8" textLength="18" lengthAdjust="spacingAndGlyphs">123</text><use href="#bolt" x="-1" y="-2" transform="scale(.9)"/></g>
<g transform="translate(1552,517)"><path class="d" d="M12 2H23V10M5 22V23H12" style="stroke:#a19f9d"/><rect x="12" y="3" width="11" height="8" fill="#e8e6e4" stroke="#a19f9d"/><rect x="1" y="12" width="10" height="10" fill="#e8e6e4" stroke="#a19f9d"/><path d="M12 13H26L21 19V25H17V19Z" fill="#f3f2f1" stroke="#484644" stroke-width="1.400"/><use href="#bolt" x="0" y="-2"/></g>
<g transform="translate(1587,517)"><path d="M1 24V4H23V11M1 24H12" fill="none" stroke="#484644" stroke-width="1.300"/><path d="M7 20L11 8L14 18" fill="none" stroke="#2b88d8"/><path d="M12 13H26L21 19V25H17V19Z" fill="#f3f2f1" stroke="#484644" stroke-width="1.400"/><use href="#bolt" x="0" y="-2"/></g>
<g transform="translate(1622,517)"><path d="M1 24V4H23V11M1 24H12" fill="none" stroke="#484644" stroke-width="1.300"/><rect x="5" y="14" width="4" height="4" fill="none" stroke="#605e5c"/><path d="M12 13H26L21 19V25H17V19Z" fill="#f3f2f1" stroke="#484644" stroke-width="1.400"/><use href="#bolt" x="0" y="-2"/></g>
<g transform="translate(1657,517)"><rect x="1" y="2" width="22" height="22" fill="#2b88d8"/><path d="M5 20L8 10L14 8L19 4V14L10 20Z" fill="#f3f2f1"/><path d="M-0.500 0H9V6L5 11L-0.500 6Z" fill="#d9722a"/><circle cx="20" cy="20" r="4" fill="#d9722a"/></g>

<g transform="translate(1482,552)" fill="none" stroke="#605e5c" stroke-width="1.400"><path d="M12 1L23 12L12 23L1 12ZM6 7L17 18M18 6L7 17"/></g>
<g transform="translate(1517,552)" fill="none" stroke="#2b88d8" stroke-width="1.500"><path d="M1 2H11L22 12L11 23H1L11 12ZM8 23L17 14M12 2L22 10"/></g>
<g fill="#323130"><circle cx="1556" cy="561" r="1.200"/><circle cx="1564" cy="561" r="1.200"/><circle cx="1572" cy="561" r="1.200"/></g>
</g>

<rect x="1469" y="587" width="225" height="1" fill="#e1dfdd"/>
<text class="v" x="1484" y="614" font-size="14" textLength="42" lengthAdjust="spacingAndGlyphs">Values</text>
<rect x="1474.500" y="625.500" width="212" height="33" fill="#fff" stroke="#c8c6c4" stroke-dasharray="3 2"/>
<text class="v" x="1488" y="648" textLength="133" lengthAdjust="spacingAndGlyphs">Add data fields here</text>
<text class="v" x="1484" y="689" textLength="87" lengthAdjust="spacingAndGlyphs" style="font-weight:700;fill:#484644">Drill through</text>
<text class="v" x="1484" y="720" textLength="83" lengthAdjust="spacingAndGlyphs">Cross-report</text>
<rect x="1627.500" y="705.500" width="39" height="19" rx="9.500" fill="#fff" stroke="#8a8886"/><circle cx="1638" cy="715" r="5" fill="#605e5c"/><text x="1645" y="720" font-size="12.500" fill="#605e5c" textLength="16" lengthAdjust="spacingAndGlyphs">Off</text>
<text class="v" x="1484" y="754" textLength="92" lengthAdjust="spacingAndGlyphs">Keep all filters</text>
<rect x="1627" y="739" width="40" height="20" rx="10" fill="#117865"/><circle cx="1656" cy="749" r="5" fill="#fff"/><text x="1633" y="754" font-size="12.500" fill="#fff" textLength="14" lengthAdjust="spacingAndGlyphs">On</text>
<rect x="1474.500" y="772.500" width="212" height="30" fill="#fff" stroke="#c8c6c4" stroke-dasharray="3 2"/>
<text class="v" x="1485" y="794" textLength="188" lengthAdjust="spacingAndGlyphs">Add drill-through fields here</text>

<!-- data pane -->
<rect x="1701.500" y="223.500" width="212" height="29" rx="4" fill="#fff" stroke="#d2d0ce"/><path d="M1703 252.500H1912" stroke="#605e5c" stroke-width="1.200"/>
<circle cx="1723" cy="237" r="6" fill="none" stroke="#484644" stroke-width="1.300"/><path d="M1727.500 241.500L1733 247" stroke="#484644" stroke-width="1.300"/>
<text x="1743" y="245" font-size="17" fill="#605e5c" textLength="50" lengthAdjust="spacingAndGlyphs">Search</text>
<g fill="none" stroke="#484644" stroke-width="1.100"><path d="M1715 272L1722 279L1715 286M1715 303L1722 310L1715 317M1715 333L1722 340L1715 347M1715 363L1722 370L1715 377M1715 393L1722 400L1715 407M1715 423L1722 430L1715 437M1715 453L1722 460L1715 467M1715 483L1722 490L1715 497"/></g>
<use href="#tb" x="1731" y="272"/><rect x="1741" y="279" width="10" height="10" fill="#f3f2f1" stroke="#484644"/><path d="M1743 284H1749M1743 287H1749M1746 282V288" stroke="#484644"/>
<use href="#tb" x="1732" y="302.500"/><use href="#tb" x="1732" y="332.500"/><use href="#tb" x="1732" y="362.500"/><use href="#tb" x="1732" y="392.500"/><use href="#tb" x="1732" y="422.500"/><use href="#tb" x="1732" y="452.500"/><use href="#tb" x="1732" y="482.500"/>
<g font-size="14.500" fill="#323130">
<text x="1754" y="285" textLength="42" lengthAdjust="spacingAndGlyphs">[Table]</text>
<text x="1754" y="315" textLength="81" lengthAdjust="spacingAndGlyphs">assessments</text>
<text x="1754" y="345" textLength="49" lengthAdjust="spacingAndGlyphs">courses</text>
<text x="1754" y="375" textLength="127" lengthAdjust="spacingAndGlyphs">studentAssessment</text>
<text x="1754" y="405" textLength="75" lengthAdjust="spacingAndGlyphs">studentInfo</text>
<text x="1754" y="435" textLength="128" lengthAdjust="spacingAndGlyphs">studentRegistration</text>
<text x="1754" y="465" textLength="70" lengthAdjust="spacingAndGlyphs">studentVle</text>
<text x="1754" y="495" textLength="18" lengthAdjust="spacingAndGlyphs">vle</text>
</g>
<path d="M1883 272L1890 285H1876Z" fill="none" stroke="#d08a72" stroke-width="1.200"/><path d="M1883 276V281M1883 282.500V284" stroke="#d08a72"/>

<!-- page tabs -->
<rect x="66" y="921" width="23" height="14" fill="#fff" stroke="#484644" stroke-width="1.300"/><rect x="67" y="922" width="21" height="2" fill="#8cbbe6"/><path d="M77.500 935V938M72 938.500H83" stroke="#484644" stroke-width="1.300"/>
<rect x="64" y="948" width="30" height="3" rx="1.500" fill="#117865"/>
<rect x="126.500" y="918.500" width="15" height="24" rx="2" fill="#fff" stroke="#484644" stroke-width="1.300"/><rect x="133" y="938" width="2" height="2" fill="#484644"/>
<path d="M173 930L168 934.500L173 939ZM197 930L202 934.500L197 939Z" fill="#c8c6c4"/>
<rect x="211" y="912" width="374" height="44" fill="#fff"/>
<rect x="210.500" y="912" width="1" height="44" fill="#a19f9d"/><rect x="322.500" y="912" width="1" height="44" fill="#c8c6c4"/><rect x="454" y="912" width="1" height="44" fill="#c8c6c4"/>
<text x="236" y="941" font-size="15" fill="#323130" textLength="61" lengthAdjust="spacingAndGlyphs">Overview</text>
<text x="349" y="941" font-size="15" fill="#323130" stroke="#323130" stroke-width=".35" textLength="79" lengthAdjust="spacingAndGlyphs">Dashboard1</text>
<rect x="323" y="952" width="131" height="4" fill="#117865"/>
<text x="440" y="928" font-size="13" font-weight="700" fill="#323130">x</text>
<text x="480" y="941" font-size="15" fill="#323130" textLength="79" lengthAdjust="spacingAndGlyphs">Dashboard2</text>
<rect x="585" y="912" width="49" height="44" fill="#117865"/><path d="M609.500 925V939M602 932H617" stroke="#fff" stroke-width="3.500"/>

<!-- watermark -->
<g opacity=".27"><text x="843" y="893" font-family="'DejaVu Sans',sans-serif" font-size="78" font-weight="700" fill="#c8c8c8" stroke="#c8c8c8" stroke-width="3" stroke-linejoin="round" textLength="231" lengthAdjust="spacingAndGlyphs" style="direction:rtl" dx="231">مستقل</text></g>
<text x="843" y="937" font-size="38" font-weight="700" fill="#aaa" fill-opacity=".27" textLength="231" lengthAdjust="spacingAndGlyphs">mostaql.com</text>
</svg>
</body></html>
